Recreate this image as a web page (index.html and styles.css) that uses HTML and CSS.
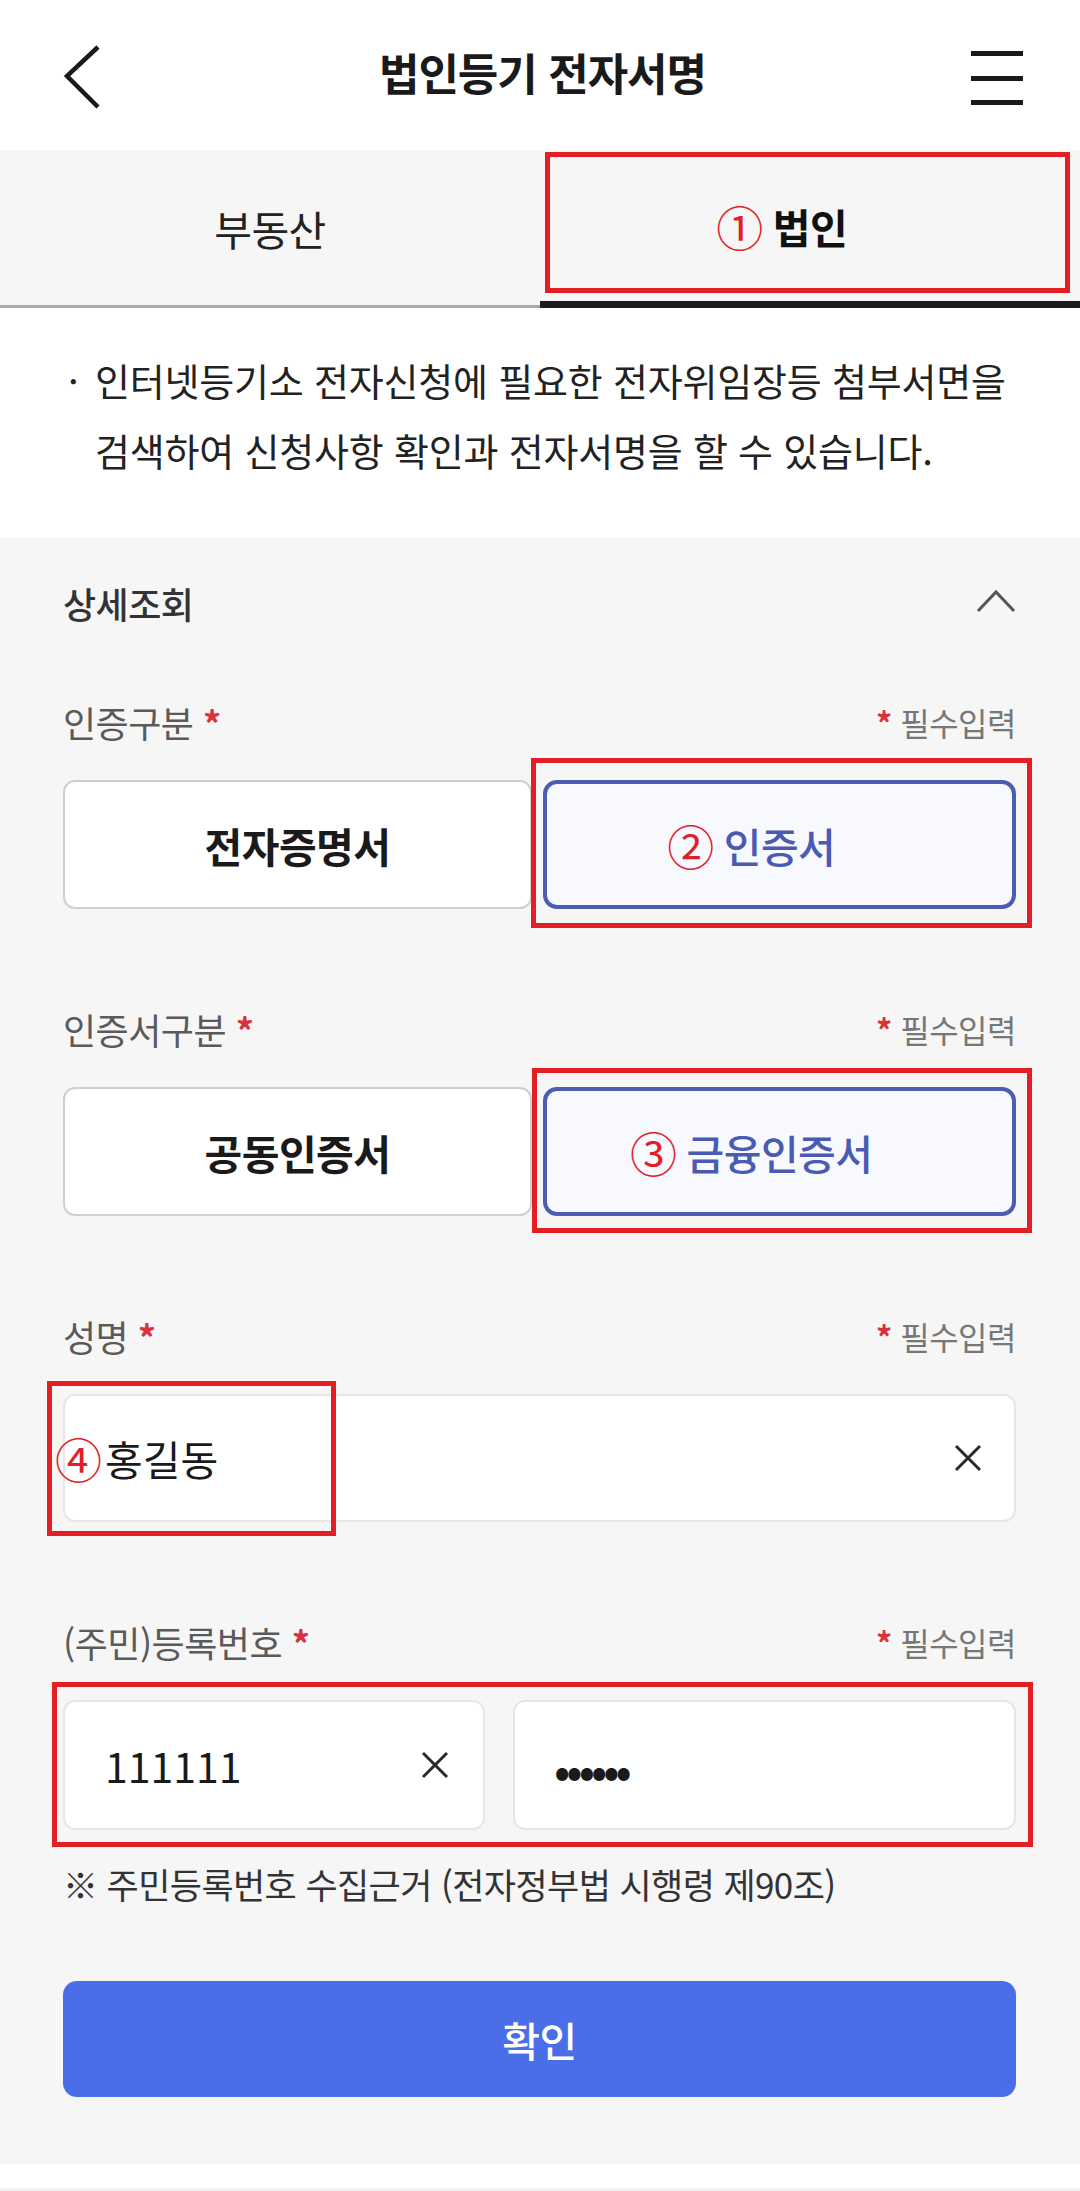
FILE: index.html
```html
<!DOCTYPE html>
<html lang="ko">
<head>
<meta charset="utf-8">
<title>법인등기 전자서명</title>
<link rel="stylesheet" href="styles.css">
</head>
<body>
<div class="page">
  <header class="topbar">
    <svg class="back" width="40" height="66" viewBox="0 0 40 66" aria-hidden="true">
      <polyline points="36,2 5,31 36,62" fill="none" stroke="#1a1a1a" stroke-width="4.5" stroke-linejoin="miter"/>
    </svg>
    <h1 class="title">법인등기 전자서명</h1>
    <svg class="menu" width="52" height="56" viewBox="0 0 52 56" aria-hidden="true">
      <rect x="0" y="1" width="52" height="5" fill="#1a1a1a"/>
      <rect x="0" y="26" width="52" height="5" fill="#1a1a1a"/>
      <rect x="0" y="50" width="52" height="5" fill="#1a1a1a"/>
    </svg>
  </header>

  <nav class="tabs">
    <div class="tab">부동산</div>
    <div class="tab tab-active"><span class="txt"><span class="num">①</span>법인</span><span class="mark mark-tab"></span></div>
  </nav>

  <section class="intro">
    <p class="bullet"><span class="dot">·</span><span>인터넷등기소 전자신청에 필요한 전자위임장등 첨부서면을 검색하여 신청사항 확인과 전자서명을 할 수 있습니다.</span></p>
  </section>

  <section class="detail">
    <div class="detail-head">
      <span>상세조회</span>
      <svg class="chev-up" width="40" height="24" viewBox="0 0 40 24" aria-hidden="true">
        <polyline points="2,22 20,3 38,22" fill="none" stroke="#555" stroke-width="3"/>
      </svg>
    </div>

    <div class="field field-first">
      <div class="label-row"><span class="label">인증구분 <em>*</em></span><span class="req"><em>*</em> 필수입력</span></div>
      <div class="choice">
        <button class="opt">전자증명서</button>
        <button class="opt opt-on"><span class="txt"><span class="num">②</span>인증서</span><span class="mark mark-2"></span></button>
      </div>
    </div>

    <div class="field">
      <div class="label-row"><span class="label">인증서구분 <em>*</em></span><span class="req"><em>*</em> 필수입력</span></div>
      <div class="choice">
        <button class="opt">공동인증서</button>
        <button class="opt opt-on"><span class="txt"><span class="num">③</span>금융인증서</span><span class="mark mark-3"></span></button>
      </div>
    </div>

    <div class="field">
      <div class="label-row"><span class="label">성명 <em>*</em></span><span class="req"><em>*</em> 필수입력</span></div>
      <div class="input input-name">
        <span class="txt"><span class="num num-tight">④</span>홍길동</span>
        <svg class="clear" width="30" height="30" viewBox="0 0 30 30" aria-hidden="true">
          <path d="M3 3 L27 27 M27 3 L3 27" stroke="#2a2a2a" stroke-width="3" fill="none"/>
        </svg>
        <span class="mark mark-4"></span>
      </div>
    </div>

    <div class="field">
      <div class="label-row"><span class="label">(주민)등록번호 <em>*</em></span><span class="req"><em>*</em> 필수입력</span></div>
      <div class="id-row">
        <div class="input input-id">
          <span class="value">111111</span>
          <svg class="clear" width="30" height="30" viewBox="0 0 30 30" aria-hidden="true">
            <path d="M3 3 L27 27 M27 3 L3 27" stroke="#2a2a2a" stroke-width="3" fill="none"/>
          </svg>
        </div>
        <div class="input input-pw"><span class="value dots">••••••</span></div>
        <span class="mark mark-5"></span>
      </div>
    </div>

    <p class="note">※ 주민등록번호 수집근거 (전자정부법 시행령 제90조)</p>

    <button class="submit">확인</button>
  </section>
  <div class="foot"></div>
</div>
</body>
</html>
```

FILE: styles.css
```css
* { box-sizing: border-box; }
html, body { margin: 0; padding: 0; background: #fff; }
body {
  font-family: "Noto Sans CJK KR", "Noto Sans", sans-serif;
  color: #1e1e1e;
}
.page { width: 1080px; }

.topbar {
  height: 150px;
  display: grid;
  grid-template-columns: 1fr auto 1fr;
  align-items: center;
  padding: 0 57px 0 62px;
}
.back { justify-self: start; margin-top: 6px; }
.menu { justify-self: end; margin-top: 6px; }
.title {
  margin: 0 0 6px;
  font-size: 44px;
  font-weight: 700;
  letter-spacing: -1px;
  color: #1a1a1a;
}

.tabs {
  display: flex;
  height: 158px;
  background: #f6f6f6;
}
.tab {
  flex: 1;
  display: flex;
  align-items: center;
  justify-content: center;
  font-size: 41px;
  color: #222;
  border-bottom: 3px solid #a9a9a9;
  letter-spacing: -0.5px;
}
.tab-active {
  position: relative;
  font-weight: 700;
  color: #111;
  border-bottom: 7px solid #1c1c1c;
}

.txt { position: relative; }
.num {
  position: absolute;
  right: 100%;
  top: 50%;
  transform: translateY(-52%);
  margin-right: 10px;
  color: #e01f26;
  font-weight: 400;
  font-size: 47px;
  line-height: 1;
}
.num-tight { margin-right: 3px; }

.mark {
  position: absolute;
  border: 5px solid #e31e25;
  pointer-events: none;
}
.mark-tab { top: 2px; left: 5px; right: 10px; bottom: 8px; }

.intro { padding: 37px 50px 53px 64px; }
.bullet {
  margin: 0;
  display: flex;
  font-size: 38px;
  line-height: 70px;
  color: #222;
  letter-spacing: -0.2px;
}
.dot { flex: 0 0 31px; padding-left: 4px; }

.detail {
  background: #f6f6f7;
  padding: 25px 64px 67px 63px;
}
.detail-head {
  height: 80px;
  display: flex;
  align-items: center;
  justify-content: space-between;
  font-size: 36px;
  font-weight: 500;
  color: #333;
  letter-spacing: -0.5px;
}
.chev-up { margin-top: -4px; }

.field { margin-top: 95px; }
.field-first { margin-top: 54px; }
.label-row {
  height: 50px;
  display: flex;
  align-items: center;
  justify-content: space-between;
  margin-bottom: 33px;
}
.label { font-size: 36px; color: #5a5a5a; letter-spacing: -0.5px; }
.label em, .req em {
  font-style: normal;
  color: #d8333b;
  font-weight: 700;
}
.req { font-size: 32px; color: #777; letter-spacing: -0.5px; }

.choice {
  display: grid;
  grid-template-columns: 469px 1fr;
  gap: 11px;
}
.opt {
  height: 129px;
  border: 2px solid #cfcfcf;
  border-radius: 12px;
  background: #fff;
  font-family: inherit;
  font-size: 41px;
  font-weight: 700;
  color: #1a1a1a;
  letter-spacing: -0.5px;
  padding: 0;
}
.opt-on {
  position: relative;
  border: 4px solid #4b5db2;
  border-radius: 14px;
  background: #f8f9fe;
  color: #4a5bb3;
  font-weight: 500;
}
.mark-2 { top: -26px; left: -16px; right: -20px; bottom: -23px; }
.mark-3 { top: -23px; left: -15px; right: -20px; bottom: -21px; }

.input {
  position: relative;
  height: 128px;
  background: #fff;
  border: 2px solid #e6e6e6;
  border-radius: 12px;
  display: flex;
  align-items: center;
  justify-content: space-between;
  font-size: 41px;
  color: #1a1a1a;
}
.input-name { padding: 0 31px 0 40px; }
.mark-4 { top: -15px; left: -18px; width: 289px; bottom: -16px; }

.id-row {
  position: relative;
  display: grid;
  grid-template-columns: 422px 1fr;
  gap: 28px;
}
.input-id { height: 130px; padding: 0 33px 0 40px; }
.input-pw { height: 130px; padding: 0 0 0 39px; justify-content: flex-start; }
.dots { font-size: 48px; letter-spacing: -4px; line-height: 1; margin-top: 6px; }
.mark-5 { top: -18px; left: -11px; right: -17px; bottom: -17px; }

.note {
  margin: 29px 0 0;
  height: 50px;
  line-height: 50px;
  font-size: 35px;
  color: #333;
  letter-spacing: -0.6px;
}

.submit {
  display: block;
  width: 100%;
  height: 116px;
  margin-top: 72px;
  border: 0;
  border-radius: 14px;
  background: #4a6ee8;
  color: #fff;
  font-family: inherit;
  font-size: 41px;
  font-weight: 500;
  letter-spacing: -0.5px;
}

.foot {
  height: 28px;
  border-bottom: 4px solid #f1f1f3;
}
```
